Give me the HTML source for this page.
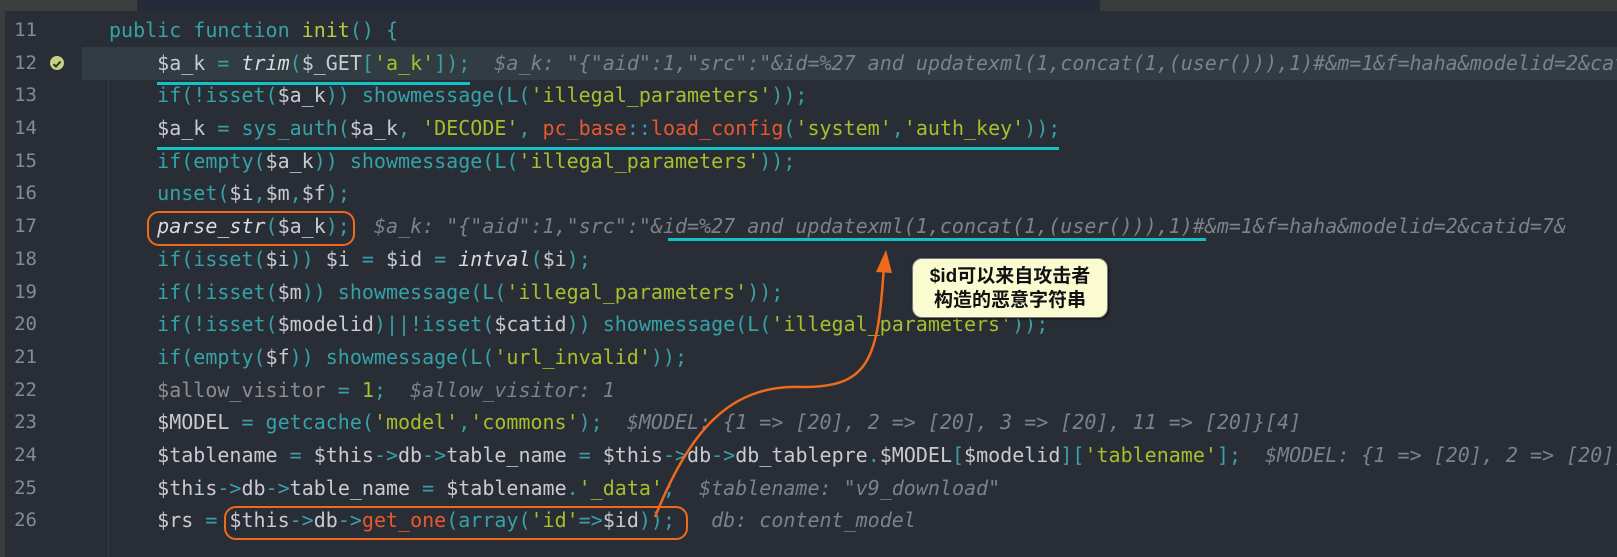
<!DOCTYPE html>
<html><head><meta charset="utf-8"><style>
html,body{margin:0;padding:0;}
body{width:1617px;height:557px;overflow:hidden;background:#292d36;position:relative;font-family:"DejaVu Sans Mono","Liberation Mono",monospace;}
.top1{position:absolute;left:0;top:0;width:137px;height:11px;background:#3c3d3f;}
.top2{position:absolute;left:137px;top:0;width:1480px;height:11px;background:#252b38;}
.top3{position:absolute;left:1100px;top:0;width:517px;height:11px;background:#3a3b3c;}
.lb{position:absolute;left:0;top:11px;width:5px;height:546px;background:#3c3d3f;}
.hl{position:absolute;left:82px;top:47px;width:1535px;height:33px;background:#313d43;}
.guide{position:absolute;left:108px;top:47px;width:1px;height:510px;background:#353a42;}
.ln{position:absolute;left:0;width:37px;text-align:right;color:#868b91;font-size:19px;}
.ln div,.code div{height:32.7px;line-height:32.7px;}
.code{position:absolute;left:109px;width:1508px;overflow:hidden;white-space:pre;font-size:20px;color:#c8cbd0;}
.k{color:#35a2a8}.s{color:#a6bf2c}.p{color:#3aa0a6}.h{color:#7d818a;font-style:italic}.r{color:#e8582e}.i{font-style:italic;color:#d8dade}.g{color:#8a8d92}.y{color:#b7c93a}
.ul{position:absolute;height:3px;background:#12c3c6;}
.ob{position:absolute;border:2px solid #f06a1c;border-radius:12px;}
.call{position:absolute;left:912px;top:258px;width:196px;height:60px;background:#fbfbd2;border:1.5px solid #777;border-radius:10px;box-shadow:1px 1px 2px #111;font-family:"Liberation Sans","Noto Sans CJK SC",sans-serif;font-weight:bold;font-size:19px;line-height:24px;text-align:center;color:#111;padding-top:6px;box-sizing:border-box;}
.chk{position:absolute;left:50px;top:56px;width:14px;height:14px;border-radius:50%;background:#c5d17c;}
</style></head><body>
<div class="top1"></div><div class="top2"></div><div class="top3"></div><div class="lb"></div>
<div class="hl"></div><div class="guide"></div>
<div class="chk"><svg width="14" height="14" viewBox="0 0 14 14"><path d="M3.5 7.2 L6 9.5 L10.5 4.5" stroke="#2a2f30" stroke-width="2" fill="none"/></svg></div>
<div class="ln" style="top:14px"><div>11</div><div>12</div><div>13</div><div>14</div><div>15</div><div>16</div><div>17</div><div>18</div><div>19</div><div>20</div><div>21</div><div>22</div><div>23</div><div>24</div><div>25</div><div>26</div></div>
<div class="code" style="top:14px"><div><span class="k">public function </span><span class="y">init</span><span class="p">() {</span></div><div>    $a_k <span class="p">=</span> <span class="i">trim</span><span class="p">(</span>$_GET<span class="p">[</span><span class="s">'a_k'</span><span class="p">]);</span>  <span class="h">$a_k: "{"aid":1,"src":"&amp;id=%27 and updatexml(1,concat(1,(user())),1)#&amp;m=1&amp;f=haha&amp;modelid=2&amp;catid=7&amp;</span></div><div>    <span class="k">if(!isset(</span>$a_k<span class="k">)) showmessage(L(</span><span class="s">'illegal_parameters'</span><span class="p">));</span></div><div>    $a_k <span class="p">=</span> <span class="k">sys_auth(</span>$a_k<span class="p">,</span> <span class="s">'DECODE'</span><span class="p">,</span> <span class="r">pc_base</span><span class="p">::</span><span class="r">load_config</span><span class="p">(</span><span class="s">'system'</span><span class="p">,</span><span class="s">'auth_key'</span><span class="p">));</span></div><div>    <span class="k">if(empty(</span>$a_k<span class="k">)) showmessage(L(</span><span class="s">'illegal_parameters'</span><span class="p">));</span></div><div>    <span class="k">unset(</span>$i<span class="p">,</span>$m<span class="p">,</span>$f<span class="p">);</span></div><div>    <span class="i">parse_str</span><span class="p">(</span>$a_k<span class="p">);</span>  <span class="h">$a_k: "{"aid":1,"src":"&amp;id=%27 and updatexml(1,concat(1,(user())),1)#&amp;m=1&amp;f=haha&amp;modelid=2&amp;catid=7&amp;</span></div><div>    <span class="k">if(isset(</span>$i<span class="k">))</span> $i <span class="p">=</span> $id <span class="p">=</span> <span class="i">intval</span><span class="p">(</span>$i<span class="p">);</span></div><div>    <span class="k">if(!isset(</span>$m<span class="k">)) showmessage(L(</span><span class="s">'illegal_parameters'</span><span class="p">));</span></div><div>    <span class="k">if(!isset(</span>$modelid<span class="k">)||!isset(</span>$catid<span class="k">)) showmessage(L(</span><span class="s">'illegal_parameters'</span><span class="p">));</span></div><div>    <span class="k">if(empty(</span>$f<span class="k">)) showmessage(L(</span><span class="s">'url_invalid'</span><span class="p">));</span></div><div>    <span class="g">$allow_visitor</span> <span class="p">=</span> <span class="s">1</span><span class="p">;</span>  <span class="h">$allow_visitor: 1</span></div><div>    $MODEL <span class="p">=</span> <span class="k">getcache(</span><span class="s">'model'</span><span class="p">,</span><span class="s">'commons'</span><span class="p">);</span>  <span class="h">$MODEL: {1 =&gt; [20], 2 =&gt; [20], 3 =&gt; [20], 11 =&gt; [20]}[4]</span></div><div>    $tablename <span class="p">=</span> $this<span class="p">-&gt;</span>db<span class="p">-&gt;</span>table_name <span class="p">=</span> $this<span class="p">-&gt;</span>db<span class="p">-&gt;</span>db_tablepre<span class="p">.</span>$MODEL<span class="p">[</span>$modelid<span class="p">][</span><span class="s">'tablename'</span><span class="p">];</span>  <span class="h">$MODEL: {1 =&gt; [20], 2 =&gt; [20], 3</span></div><div>    $this<span class="p">-&gt;</span>db<span class="p">-&gt;</span>table_name <span class="p">=</span> $tablename<span class="p">.</span><span class="s">'_data'</span><span class="p">;</span>  <span class="h">$tablename: "v9_download"</span></div><div>    $rs <span class="p">=</span> $this<span class="p">-&gt;</span>db<span class="p">-&gt;</span><span class="r">get_one</span><span class="p">(</span><span class="k">array(</span><span class="s">'id'</span><span class="p">=&gt;</span>$id<span class="p">));</span>   <span class="h">db: content_model</span></div></div>
<div class="ul" style="left:157px;top:82px;width:313px"></div>
<div class="ul" style="left:157px;top:147px;width:902px"></div>
<div class="ul" style="left:668px;top:238px;width:538px"></div>
<div class="ob" style="left:147px;top:211px;width:204px;height:31px"></div>
<div class="ob" style="left:224px;top:506px;width:460px;height:30px"></div>
<svg style="position:absolute;left:0;top:0" width="1617" height="557">
<path d="M655 517 C 690 430, 730 385, 800 387 C 870 388, 878 360, 884 265" stroke="#f06a1c" stroke-width="2.5" fill="none"/>
<path d="M876 272 L886 250 L892 273 Z" fill="#f06a1c"/>
</svg>
<div class="call">$id可以来自攻击者<br>构造的恶意字符串</div>
</body></html>
